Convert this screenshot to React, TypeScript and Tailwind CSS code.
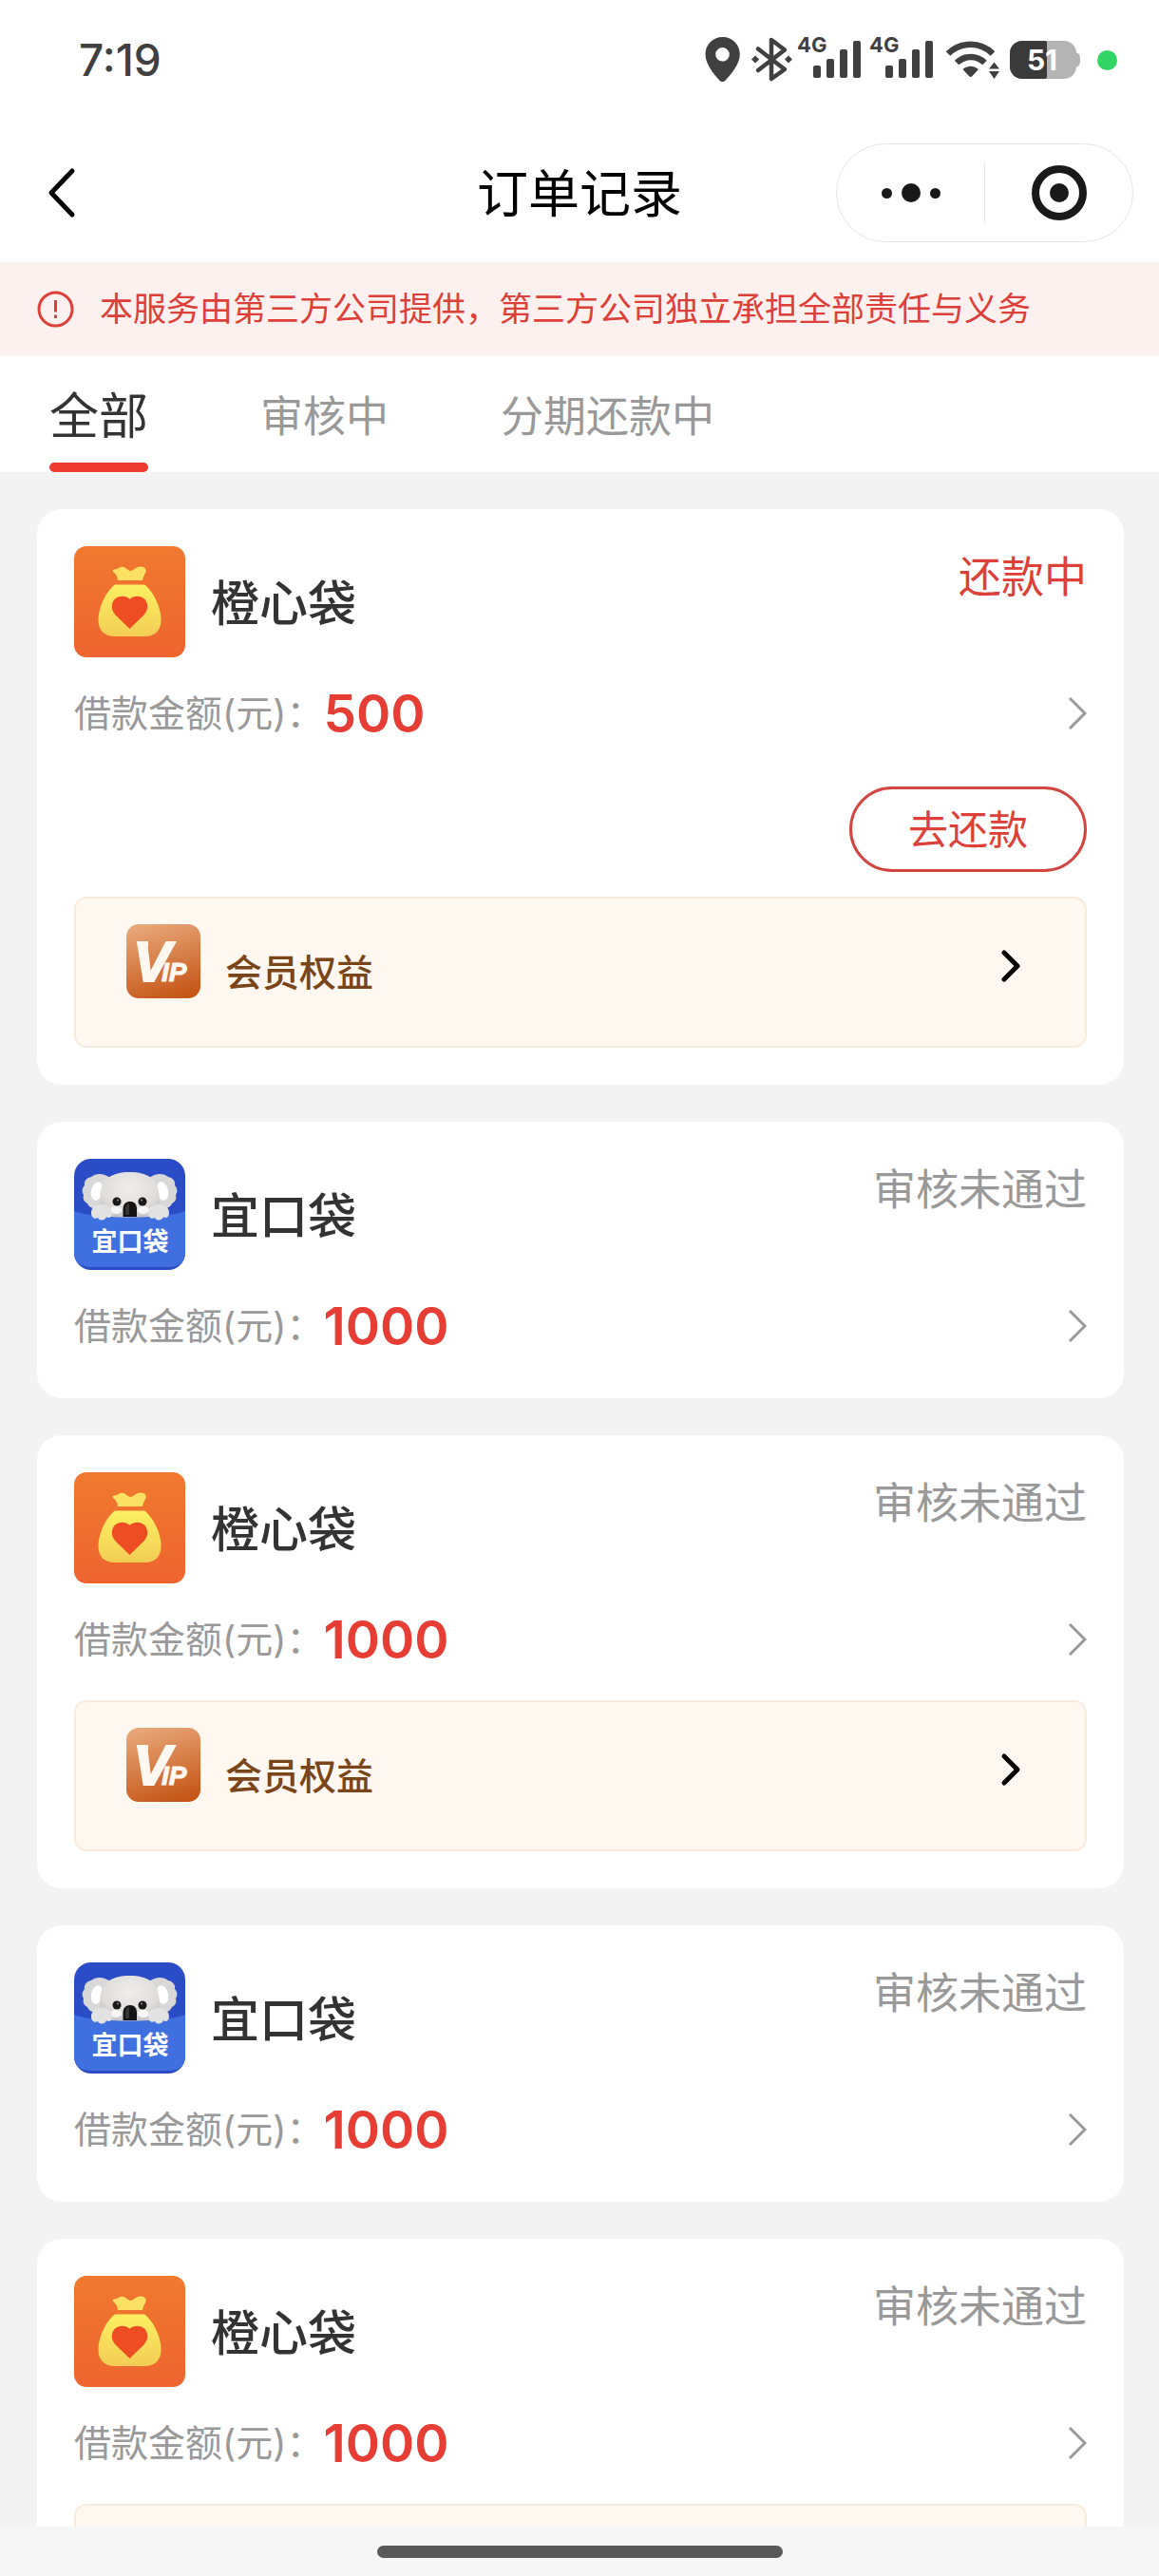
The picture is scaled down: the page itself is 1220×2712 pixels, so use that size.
import { useState } from "react";

type Brand = "orange" | "koala";

interface Order {
  id: number;
  brand: Brand;
  name: string;
  status: string;
  amount: number;
  repaying?: boolean;
  vip?: boolean;
}

const TABS = ["全部", "审核中", "分期还款中"];

const ORDERS: Order[] = [
  { id: 1, brand: "orange", name: "橙心袋", status: "还款中", amount: 500, repaying: true, vip: true },
  { id: 2, brand: "koala", name: "宜口袋", status: "审核未通过", amount: 1000 },
  { id: 3, brand: "orange", name: "橙心袋", status: "审核未通过", amount: 1000, vip: true },
  { id: 4, brand: "koala", name: "宜口袋", status: "审核未通过", amount: 1000 },
  { id: 5, brand: "orange", name: "橙心袋", status: "审核未通过", amount: 1000, vip: true },
];

function SignalIcon() {
  return (
    <svg width="71" height="48" viewBox="0 0 71 48" fill="#404040" className="overflow-visible" aria-hidden="true">
      <text x="0" y="16" fontSize="22" fontWeight="700">4G</text>
      <rect x="17" y="30" width="8" height="13" rx="2" />
      <rect x="31" y="23" width="8" height="20" rx="2" />
      <rect x="45" y="13" width="8" height="30" rx="2" />
      <rect x="59" y="4" width="8" height="39" rx="2" />
    </svg>
  );
}

function StatusBar() {
  return (
    <div className="flex h-[126px] items-center justify-between pl-[83px] pr-[44px]">
      <span className="text-[46px] font-medium leading-[50px] text-[#404040]">7:19</span>
      <div className="flex items-center gap-[5px]">
        <svg width="44" height="48" viewBox="0 0 44 48" aria-hidden="true">
          <path
            fill="#404040"
            fillRule="evenodd"
            d="M18.500 0C8.300 0 .5 8 .5 18c0 10.500 8.500 20.500 14.800 27.600 1.800 2 4.600 2 6.400 0C28 38.500 36.800 28.500 36.800 18c0-10-8-18-18.300-18Zm0 11a7.300 7.300 0 1 1 0 14.600 7.300 7.300 0 0 1 0-14.600Z"
          />
        </svg>
        <svg width="43" height="48" viewBox="0 0 43 48" aria-hidden="true">
          <path
            d="M7 12.500 35 34 21 44V3l14 10.500L7 35"
            fill="none"
            stroke="#404040"
            strokeWidth="4.500"
            strokeLinecap="round"
            strokeLinejoin="round"
          />
          <path fill="#404040" d="m4 19.500 4.200 4L4 27.500l-4-4zM39 19.500l4 4-4 4-4-4z" />
        </svg>
        <SignalIcon />
        <SignalIcon />
        <svg width="66" height="48" viewBox="0 0 66 48" aria-hidden="true">
          <g fill="none" stroke="#404040" strokeWidth="6.500">
            <path d="M7 17.500C20 4.500 41 4.500 54 17.500" />
            <path d="M16 27c8.500-8 21-8 29.500 0" />
          </g>
          <path fill="#404040" d="M22.500 34c5-4.500 11.500-4.500 16.500 0l-6.500 7c-1.100 1.200-2.500 1.200-3.600 0zM55.500 26.500l5.500 7H50zM50 36h11l-5.500 8z" />
        </svg>
        <svg width="88" height="48" viewBox="0 0 88 48" aria-hidden="true">
          <defs>
            <clipPath id="battery">
              <rect x="1" y="4" width="70" height="40" rx="13" />
            </clipPath>
          </defs>
          <g clipPath="url(#battery)">
            <rect x="1" y="4" width="70" height="40" fill="#b4b4b4" />
            <rect x="1" y="4" width="39" height="40" rx="2" fill="#3a3a3a" />
          </g>
          <path fill="#b4b4b4" d="M70 16c4 1 5 3 5 8s-1 7-5 8z" />
          <text x="35" y="35" fontSize="30" fontWeight="700" fill="#fff" textAnchor="middle">51</text>
        </svg>
        <span className="size-[21px] rounded-full bg-[#30d565]" />
      </div>
    </div>
  );
}

function NavBar() {
  return (
    <div className="grid h-[150px] grid-cols-[1fr_auto_1fr] items-center px-[27px] pt-[4px]">
      <button type="button" aria-label="返回" className="justify-self-start pl-[22px]">
        <svg width="32" height="56" viewBox="0 0 32 56" fill="none" aria-hidden="true">
          <path d="M27 5 5 28l22 23" stroke="#000" strokeWidth="5" strokeLinecap="round" strokeLinejoin="round" />
        </svg>
      </button>
      <h1 className="pt-[4px] text-[54px] leading-[70px] text-black">订单记录</h1>
      <div className="flex h-[104px] w-[313px] items-center justify-self-end rounded-full border border-[#e5e5e5]">
        <button type="button" aria-label="更多" className="flex h-full flex-1 items-center justify-center gap-[10px]">
          <span className="size-[11px] rounded-full bg-[#191919]" />
          <span className="size-[20px] rounded-full bg-[#191919]" />
          <span className="size-[11px] rounded-full bg-[#191919]" />
        </button>
        <span className="h-[64px] w-px bg-[#e5e5e5]" />
        <button type="button" aria-label="关闭" className="flex h-full flex-1 items-center justify-center">
          <svg width="58" height="58" viewBox="0 0 58 58" aria-hidden="true">
            <circle cx="29" cy="29" r="25" fill="none" stroke="#191919" strokeWidth="8" />
            <circle cx="29" cy="29" r="10" fill="#191919" />
          </svg>
        </button>
      </div>
    </div>
  );
}

function BagLogo() {
  return (
    <svg width="117" height="117" viewBox="0 0 117 117" className="shrink-0" aria-hidden="true">
      <defs>
        <linearGradient id="bagBg" x1="0" y1="0" x2="0" y2="1">
          <stop offset="0" stopColor="#f0792f" />
          <stop offset="1" stopColor="#ee642f" />
        </linearGradient>
        <linearGradient id="bagBody" x1="0" y1="0" x2="0" y2="1">
          <stop offset="0" stopColor="#fdf062" />
          <stop offset="1" stopColor="#f3cd54" />
        </linearGradient>
      </defs>
      <rect width="117" height="117" rx="13" fill="url(#bagBg)" />
      <path
        fill="#fbe063"
        d="M40.500 25.500c1.500-1.800 4-.8 6-2.200 2.500-1.900 5.500-2 8.300.3 3 2.600 5 3 7.700 1.200 2.500-1.800 4-3.300 7.300-3.300 5 0 7.300 3.500 5.200 6.800-1.400 2.300-2.300 4.500-3 7.700H46c-.4-3.500-1.400-5.600-3.300-7.500-1.200-1-2.200-1.700-2.200-3Z"
      />
      <path
        fill="url(#bagBody)"
        d="M43 40.500h31C83 47 91.500 64 91.500 77.500c0 11-6 17.500-17 17.500h-32c-11 0-17-6.500-17-17.500C25.500 64 34 47 43 40.500Z"
      />
      <path fill="#ee4c22" d="M58.500 87 43.500 72.500c-5.500-6-4.500-14 .5-17.700 4.500-3.300 11-2.600 14.500 1 3.500-3.600 10-4.300 14.500-1 5 3.700 6 11.700.5 17.700z" />
    </svg>
  );
}

function KoalaLogo() {
  return (
    <svg width="117" height="117" viewBox="0 0 117 117" className="shrink-0" aria-hidden="true">
      <defs>
        <clipPath id="koalaClip">
          <rect width="117" height="117" rx="18" />
        </clipPath>
        <radialGradient id="koalaFur" cx="0.5" cy="0.35" r="0.65">
          <stop offset="0" stopColor="#efeeed" />
          <stop offset="0.7" stopColor="#dfdedc" />
          <stop offset="1" stopColor="#c8c7c8" />
        </radialGradient>
      </defs>
      <g clipPath="url(#koalaClip)">
        <rect width="117" height="117" fill="#2a4cc6" />
        <g fill="#d9d8d8">
          <path d="M38 20c-7-5-15-5-20-1-5 1-8 5-7 9-3 3-3 7-1 10-1 4 0 7 4 9 2 5 7 6 12 5h14z" />
          <path d="M79 20c7-5 15-5 20-1 5 1 8 5 7 9 3 3 3 7 1 10 1 4 0 7-4 9-2 5-7 6-12 5H77z" />
        </g>
        <ellipse cx="24" cy="34" rx="6" ry="10" fill="#fff" transform="rotate(14 24 34)" />
        <ellipse cx="93" cy="34" rx="6" ry="10" fill="#fff" transform="rotate(-14 93 34)" />
        <path fill="url(#koalaFur)" d="M58.500 14C39 14 29.500 22 28 34c-1.500 10-2 18 3 28h55c5-10 4.500-18 3-28-1.500-12-11-20-30.500-20Z" />
        <path fill="#4070df" d="M0 55c10 4 30 6.500 58.500 6.500S107 59 117 55v44c0 9-6 15-18 15H18c-12 0-18-6-18-15z" />
        <ellipse cx="44" cy="54" rx="6" ry="4" fill="#fff" fillOpacity="0.8" />
        <ellipse cx="73" cy="54" rx="6" ry="4" fill="#fff" fillOpacity="0.8" />
        <circle cx="45" cy="45" r="4.500" fill="#1a1a1c" />
        <circle cx="72" cy="45" r="4.500" fill="#1a1a1c" />
        <circle cx="46" cy="43.500" r="1" fill="#8a8a8a" />
        <circle cx="71" cy="43.500" r="1" fill="#8a8a8a" />
        <path fill="#141414" d="M51.500 53c0-5 3-8 7.500-8s7 3 7 8v8H51.500z" />
        <path fill="#555" d="M54 52c0-3 2-5 4-5v12h-4z" fillOpacity="0.5" />
        <g fill="#e3e2e3">
          <path d="M18 57c0-6 5-9 11-9s11 3 11 9c0 5-4 6-6 4-1 4-7 5-9 1-3 2-7 0-7-5Z" />
          <path d="M78 57c0-6 5-9 11-9s11 3 11 9c0 5-4 6-6 4-1 4-7 5-9 1-3 2-7 0-7-5Z" />
        </g>
        <text x="59" y="97" fontSize="27" fontWeight="700" fill="#fff" textAnchor="middle">宜口袋</text>
      </g>
    </svg>
  );
}

function VipLogo() {
  return (
    <svg width="78" height="78" viewBox="0 0 78 78" className="shrink-0" aria-hidden="true">
      <defs>
        <linearGradient id="vipBg" x1="0.3" y1="0" x2="0.6" y2="1">
          <stop offset="0" stopColor="#e8a678" />
          <stop offset="1" stopColor="#c65718" />
        </linearGradient>
      </defs>
      <rect width="78" height="78" rx="13" fill="url(#vipBg)" />
      <g fill="#fff8f0" stroke="#fff8f0" className="font-['Liberation_Sans',sans-serif] font-bold italic">
        <text x="7" y="60" fontSize="60" strokeWidth="2">V</text>
        <text x="37" y="60" fontSize="28" strokeWidth="1">IP</text>
      </g>
      <path fill="#fff8f0" d="M13 18h10v5H13z" />
    </svg>
  );
}

function OrderCard({ order }: { order: Order }) {
  return (
    <article className="rounded-[26px] bg-white p-[39px]">
      <div className="flex h-[117px] items-center gap-[27px]">
        {order.brand === "orange" ? <BagLogo /> : <KoalaLogo />}
        <h2 className="flex-1 pt-[4px] text-[51px] font-medium leading-[60px] text-[#333]">{order.name}</h2>
        <span className={`self-start text-[45px] leading-[66px] ${order.repaying ? "text-[#dc4038]" : "text-[#999]"}`}>
          {order.status}
        </span>
      </div>

      <a href="#detail" className="mt-[21px] flex h-[75px] items-center">
        <span className="text-[39px] leading-[56px] text-[#999]">借款金额(元)：</span>
        <span className="text-[55px] font-semibold leading-[56px] text-[#e63e34]">{order.amount}</span>
        <svg width="20" height="36" viewBox="0 0 20 36" fill="none" className="ml-auto" aria-hidden="true">
          <path d="m2 2 16 16L2 34" stroke="#999" strokeWidth="3" />
        </svg>
      </a>

      {order.repaying && (
        <div className="mt-[40px] flex justify-end">
          <button
            type="button"
            className="h-[90px] w-[250px] rounded-full border-3 border-[#d24540] pt-[2px] text-[42px] leading-[60px] text-[#dc4038]"
          >
            去还款
          </button>
        </div>
      )}

      {order.vip && (
        <a
          href="#vip"
          className={`flex h-[159px] items-start rounded-[13px] border-2 border-[#f8ebdd] bg-[#fef8f0] pl-[53px] pr-[66px] pt-[27px] ${
            order.repaying ? "mt-[26px]" : "mt-[27px]"
          }`}
        >
          <VipLogo />
          <span className="ml-[26px] mt-[21px] flex-1 text-[39px] font-medium leading-[60px] text-[#7a4518]">会员权益</span>
          <svg width="24" height="38" viewBox="0 0 24 38" fill="none" className="mt-[25px]" aria-hidden="true">
            <path d="m5 5 14 14L5 33" stroke="#000" strokeWidth="5" strokeLinecap="round" strokeLinejoin="round" />
          </svg>
        </a>
      )}
    </article>
  );
}

export default function App() {
  const [active, setActive] = useState(0);

  return (
    <div className="flex h-screen flex-col overflow-hidden bg-[#f3f3f3] font-['Inter','Noto_Sans_CJK_SC',sans-serif]">
      <header className="shrink-0 bg-white">
        <StatusBar />
        <NavBar />
        <div className="flex h-[98px] items-center gap-[27px] bg-[#fdf1f0] px-[39px]">
          <svg width="39" height="39" viewBox="0 0 39 39" fill="none" stroke="#dc4038" strokeWidth="3" aria-hidden="true">
            <circle cx="19.500" cy="19.500" r="17.500" />
            <path d="M19.500 10v12.500M19.500 25.500v3.500" />
          </svg>
          <p className="whitespace-nowrap text-[35px] leading-[50px] text-[#dc4038]">
            本服务由第三方公司提供，第三方公司独立承担全部责任与义务
          </p>
        </div>
        <nav className="flex h-[123px] gap-[118px] px-[52px]">
          {TABS.map((tab, i) => (
            <button
              key={tab}
              type="button"
              onClick={() => setActive(i)}
              className={`flex flex-col items-center justify-between ${
                i === active ? "text-[52px] text-[#333]" : "text-[45px] text-[#999]"
              }`}
            >
              <span className="mt-[30px] leading-[70px]">{tab}</span>
              {i === active && <span className="h-[10px] w-full rounded-full bg-[#ef3b30]" />}
            </button>
          ))}
        </nav>
      </header>

      <main className="flex min-h-0 flex-1 flex-col gap-[39px] overflow-y-auto p-[39px] pr-[37px] [scrollbar-width:none]">
        {ORDERS.map((order) => (
          <OrderCard key={order.id} order={order} />
        ))}
      </main>

      <footer className="flex h-[52px] shrink-0 items-center justify-center bg-[#f6f6f6]">
        <span className="h-[13px] w-[35%] rounded-full bg-[#595959]" />
      </footer>
    </div>
  );
}
